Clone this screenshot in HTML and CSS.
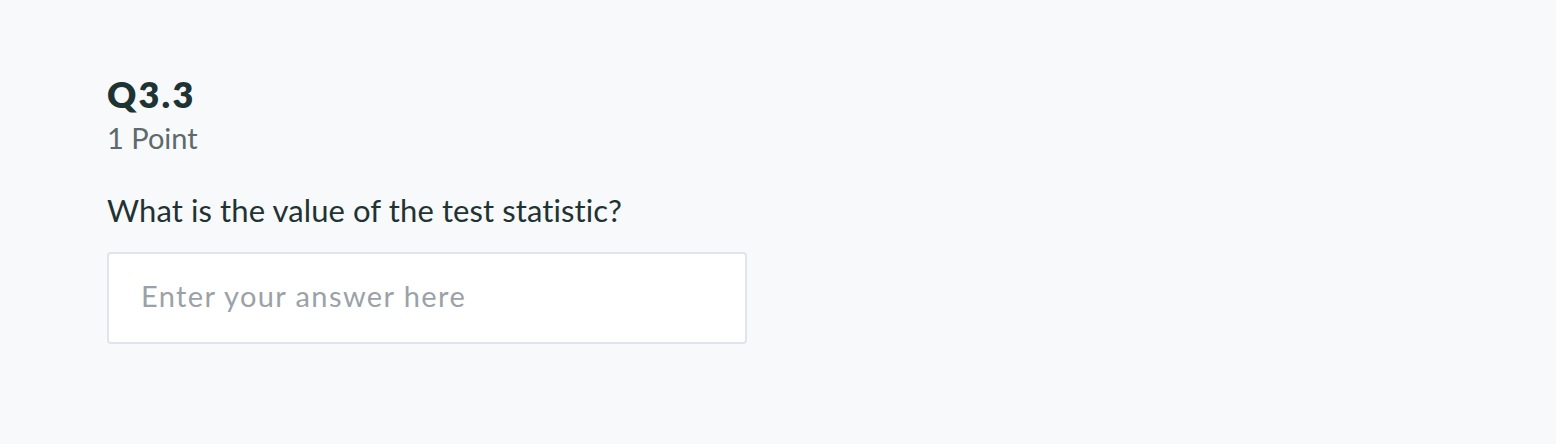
FILE: index.html
```html
<!DOCTYPE html>
<html>
<head>
<meta charset="utf-8">
<link rel="stylesheet" href="styles.css">
</head>
<body>
<main class="question">
  <h1 class="q-title">Q3.3</h1>
  <div class="q-points">1 Point</div>
  <p class="q-text">What is the value of the test statistic?</p>
  <input class="q-input" type="text" placeholder="Enter your answer here">
</main>
</body>
</html>
```
FILE: styles.css
```css
html, body {
  margin: 0;
  padding: 0;
  background: #f8f9fb;
  height: 100%;
}
body {
  font-family: Lato, "Liberation Sans", sans-serif;
  color: #1f3332;
}
.question {
  padding: 72px 0 0 107px;
  display: flex;
  flex-direction: column;
  align-items: flex-start;
}
.q-title {
  margin: 0;
  font-size: 36px;
  font-weight: 800;
  line-height: 44px;
  letter-spacing: 2.2px;
  color: #1e3333;
}
.q-points {
  margin-top: 5px;
  font-size: 29px;
  line-height: 34px;
  color: #5d6a6c;
}
.q-text {
  margin: 37px 0 0;
  font-size: 31px;
  line-height: 36px;
  letter-spacing: 0.1px;
  color: #1f3332;
}
.q-input {
  margin-top: 24px;
  box-sizing: border-box;
  width: 640px;
  height: 92px;
  background: #fff;
  border: 2px solid #e1e4ea;
  border-radius: 4px;
  padding: 0 32px 5px;
  font-family: Lato, "Liberation Sans", sans-serif;
  font-size: 29px;
  letter-spacing: 1.4px;
  color: #1f3332;
  outline: none;
}
.q-input::placeholder {
  color: #9aa2a8;
}
```
